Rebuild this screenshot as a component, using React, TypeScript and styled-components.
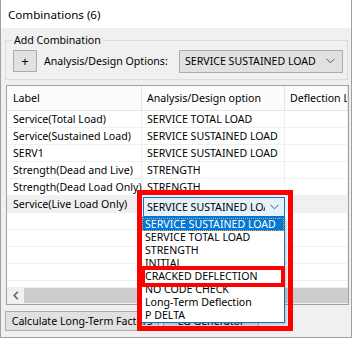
import React from 'react';
import styled, { createGlobalStyle } from 'styled-components';

const FONT = '"Noto Sans", "Open Sans", sans-serif';

const GlobalStyle = createGlobalStyle`
  body {
    margin: 0;
    background: #ffffff;
  }
  * {
    box-sizing: border-box;
  }
`;

const Window = styled.div`
  position: relative;
  width: 352px;
  height: 338px;
  background: #f0f0f0;
  border: 1px solid #a0a0a0;
  border-top: none;
  font-family: ${FONT};
  font-size: 10.6px;
  color: #000;
  overflow: hidden;
`;

const TitleBar = styled.div`
  height: 28px;
  background: #ffffff;
  padding-left: 7px;
  display: flex;
  align-items: center;
  font-size: 11.6px;
`;

const GroupBox = styled.fieldset`
  margin: 4px 0 0 4px;
  width: 343px;
  height: 48px;
  padding: 0 4px 0 7px;
  border: 1px solid #dcdcdc;
  min-width: 0;
`;

const Legend = styled.legend`
  padding: 0 2px;
  margin-left: -1px;
  line-height: 16px;
`;

const OptionsRow = styled.div`
  display: flex;
  align-items: center;
  height: 24px;
  margin-top: 1px;
`;

const PlusButton = styled.button`
  width: 24px;
  height: 22px;
  padding: 0;
  background: #e1e1e1;
  border: 1px solid #adadad;
  font-family: ${FONT};
  font-size: 13px;
  line-height: 1;
  color: #000;
`;

const OptionsLabel = styled.span`
  margin-left: 7px;
`;

const Combo = styled.div`
  margin-left: auto;
  width: 164px;
  height: 23px;
  background: #e1e1e1;
  border: 1px solid #adadad;
  padding: 0 7px 0 5px;
  display: flex;
  align-items: center;
  justify-content: space-between;
`;

const Grid = styled.div`
  margin: 5px 0 0 5px;
  width: 343px;
  height: 220px;
  border: 1px solid #a0a0a0;
  background: #ffffff;
  display: flex;
  flex-direction: column;
  overflow: hidden;
`;

const COLUMNS = '135px 143px 1fr';

const HeaderRow = styled.div`
  display: grid;
  grid-template-columns: ${COLUMNS};
  height: 25px;
  flex: none;
  border-bottom: 1px solid #e5e5e5;
  background: #fcfcfc;
`;

const HeaderCell = styled.div<{ $pad: number }>`
  display: flex;
  align-items: center;
  padding-left: ${(p) => p.$pad}px;
  border-right: 1px solid #e5e5e5;
  white-space: nowrap;
  overflow: hidden;
`;

const Body = styled.div`
  flex: 1;
  overflow: hidden;
`;

const Row = styled.div<{ $current?: boolean }>`
  display: grid;
  grid-template-columns: ${COLUMNS};
  height: 17px;
  border-bottom: 1px solid #f0f0f0;
  background: ${(p) => (p.$current ? '#f0f0f0' : '#ffffff')};
`;

const Cell = styled.div<{ $pad: number }>`
  position: relative;
  display: flex;
  align-items: center;
  padding-left: ${(p) => p.$pad}px;
  border-right: 1px solid #f0f0f0;
  white-space: nowrap;
  overflow: visible;
`;

const Editor = styled.div`
  position: absolute;
  top: 1px;
  left: 1px;
  width: 142px;
  height: 20px;
  background: #e5f1fb;
  border: 1px solid #0078d7;
  display: flex;
  align-items: center;
  z-index: 1;
`;

const EditorText = styled.span`
  flex: 1;
  overflow: hidden;
  white-space: nowrap;
  padding-left: 3px;
`;

const EditorArrow = styled.span`
  width: 19px;
  display: flex;
  align-items: center;
  justify-content: center;
`;

const ScrollBar = styled.div`
  height: 17px;
  flex: none;
  display: flex;
  background: #f0f0f0;
`;

const ScrollArrow = styled.div`
  width: 17px;
  display: flex;
  align-items: center;
  justify-content: center;
`;

const ScrollThumb = styled.div`
  flex: 1;
  margin: 1px 0;
  background: #cdcdcd;
`;

const ButtonRow = styled.div`
  display: flex;
  gap: 4px;
  margin: 6px 0 0 4px;
`;

const ActionButton = styled.button<{ $width: number }>`
  width: ${(p) => p.$width}px;
  height: 20px;
  padding: 0;
  background: #e1e1e1;
  border: 1px solid #adadad;
  font-family: ${FONT};
  font-size: 10.6px;
  color: #000;
  white-space: nowrap;
  overflow: hidden;
`;

const DropList = styled.ul`
  position: absolute;
  left: 140px;
  top: 217px;
  width: 144px;
  margin: 0;
  padding: 0;
  list-style: none;
  background: #ffffff;
  border: 1px solid #0078d7;
  box-shadow: 2px 2px 3px rgba(0, 0, 0, 0.18);
  z-index: 2;
`;

const DropItem = styled.li<{ $selected?: boolean }>`
  height: 13px;
  line-height: 13px;
  padding-left: 3px;
  white-space: nowrap;
  overflow: hidden;
  background: ${(p) => (p.$selected ? '#0078d7' : 'transparent')};
  color: ${(p) => (p.$selected ? '#ffffff' : '#000')};
  outline: ${(p) => (p.$selected ? '1px dotted #f7a440' : 'none')};
  outline-offset: -1px;
`;

const Callout = styled.div<{ $top: number; $left: number; $w: number; $h: number; $t: number }>`
  position: absolute;
  top: ${(p) => p.$top}px;
  left: ${(p) => p.$left}px;
  width: ${(p) => p.$w}px;
  height: ${(p) => p.$h}px;
  border: ${(p) => p.$t}px solid #ff0000;
  z-index: 3;
  pointer-events: none;
`;

const Chevron = () => (
  <svg width="9" height="6" viewBox="0 0 9 6">
    <polyline points="0.5,0.8 4.5,4.8 8.5,0.8" fill="none" stroke="#555" strokeWidth="1" />
  </svg>
);

const LeftArrow = () => (
  <svg width="6" height="9" viewBox="0 0 6 9">
    <polyline points="4.8,0.8 1.2,4.5 4.8,8.2" fill="none" stroke="#606060" strokeWidth="1.6" />
  </svg>
);

const combinations = [
  { label: 'Service(Total Load)', option: 'SERVICE TOTAL LOAD' },
  { label: 'Service(Sustained Load)', option: 'SERVICE SUSTAINED LOAD' },
  { label: 'SERV1', option: 'SERVICE SUSTAINED LOAD' },
  { label: 'Strength(Dead and Live)', option: 'STRENGTH' },
  { label: 'Strength(Dead Load Only)', option: 'STRENGTH' },
];

const options = [
  'SERVICE SUSTAINED LOAD',
  'SERVICE TOTAL LOAD',
  'STRENGTH',
  'INITIAL',
  'CRACKED DEFLECTION',
  'NO CODE CHECK',
  'Long-Term Deflection',
  'P DELTA',
];

const App: React.FC = () => {
  return (
    <Window>
      <GlobalStyle />
      <TitleBar>Combinations (6)</TitleBar>
      <GroupBox>
        <Legend>Add Combination</Legend>
        <OptionsRow>
          <PlusButton>+</PlusButton>
          <OptionsLabel>Analysis/Design Options:</OptionsLabel>
          <Combo>
            <span>SERVICE SUSTAINED LOAD</span>
            <Chevron />
          </Combo>
        </OptionsRow>
      </GroupBox>
      <Grid>
        <HeaderRow>
          <HeaderCell $pad={6}>Label</HeaderCell>
          <HeaderCell $pad={5}>Analysis/Design option</HeaderCell>
          <HeaderCell $pad={5}>Deflection Load</HeaderCell>
        </HeaderRow>
        <Body>
          {combinations.map((c) => (
            <Row key={c.label}>
              <Cell $pad={6}>{c.label}</Cell>
              <Cell $pad={5}>{c.option}</Cell>
              <Cell $pad={5} />
            </Row>
          ))}
          <Row $current>
            <Cell $pad={6}>Service(Live Load Only)</Cell>
            <Cell $pad={5}>
              <Editor>
                <EditorText>SERVICE SUSTAINED LOAD</EditorText>
                <EditorArrow>
                  <Chevron />
                </EditorArrow>
              </Editor>
            </Cell>
            <Cell $pad={5} />
          </Row>
          {[0, 1, 2, 3, 4].map((i) => (
            <Row key={i}>
              <Cell $pad={6} />
              <Cell $pad={5} />
              <Cell $pad={5} />
            </Row>
          ))}
        </Body>
        <ScrollBar>
          <ScrollArrow>
            <LeftArrow />
          </ScrollArrow>
          <ScrollThumb />
        </ScrollBar>
      </Grid>
      <ButtonRow>
        <ActionButton $width={154}>Calculate Long-Term Factors</ActionButton>
        <ActionButton $width={96}>LG Generator</ActionButton>
      </ButtonRow>
      <DropList>
        {options.map((o, i) => (
          <DropItem key={o} $selected={i === 0}>
            {o}
          </DropItem>
        ))}
      </DropList>
      <Callout $top={190} $left={136} $w={156} $h={141} $t={5} />
      <Callout $top={266} $left={140} $w={144} $h={21} $t={4} />
    </Window>
  );
};

export default App;
